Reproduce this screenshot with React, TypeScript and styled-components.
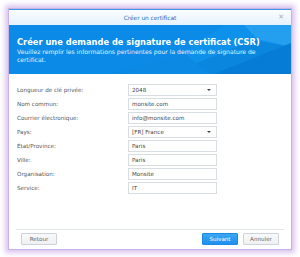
import { Fragment } from "react";
import styled, { createGlobalStyle } from "styled-components";

const GlobalStyle = createGlobalStyle`
  html, body {
    margin: 0;
    background: #ffffff;
  }
  body {
    font-family: "DejaVu Sans", "Liberation Sans", sans-serif;
  }
`;

const Page = styled.div`
  width: 300px;
  height: 257px;
  padding: 8px;
  box-sizing: border-box;
`;

const Window = styled.div`
  width: 284px;
  height: 242px;
  display: flex;
  flex-direction: column;
  background: #fff;
  border: 1px solid #c9b3e6;
  box-sizing: border-box;
  box-shadow: 0 0 5px 3px rgba(190, 150, 225, 0.55);
`;

const TitleBar = styled.div`
  position: relative;
  height: 15px;
  flex: none;
  border-top: 1px solid #3d97e3;
  background: linear-gradient(#fbfdff, #e5f1fc);
  display: flex;
  align-items: center;
  justify-content: center;
  font-size: 5.8px;
  color: #1e6fc0;
`;

const Close = styled.span`
  position: absolute;
  right: 7px;
  top: 3px;
  font-size: 7px;
  color: #a8b0b8;
`;

const Header = styled.div`
  position: relative;
  height: 49px;
  flex: none;
  overflow: hidden;
  background: #0b8be7;
  color: #fff;
  padding: 12px 8px 0 8px;
  box-sizing: border-box;
`;

const Facets = styled.svg`
  position: absolute;
  inset: 0;
`;

const HeaderText = styled.div`
  position: relative;
`;

const Title = styled.div`
  font-weight: bold;
  font-size: 8.3px;
  line-height: 11px;
  white-space: nowrap;
`;

const Subtitle = styled.div`
  font-size: 6.1px;
  line-height: 7.5px;
  width: 250px;
  color: #e4f2ff;
`;

const Form = styled.div`
  flex: 1;
  display: grid;
  grid-template-columns: 111px 89px;
  grid-auto-rows: 12px;
  row-gap: 2px;
  align-content: start;
  padding: 10px 8px 0 8px;
`;

const Label = styled.div`
  font-size: 5.6px;
  color: #555;
  display: flex;
  align-items: center;
`;

const Field = styled.div<{ $select?: boolean }>`
  position: relative;
  border: 1px solid #d8dde2;
  box-sizing: border-box;
  font-size: 5.6px;
  color: #444;
  display: flex;
  align-items: center;
  padding-left: 3px;
  ${(p) =>
    p.$select &&
    `
    &::after {
      content: "";
      position: absolute;
      right: 5px;
      top: 4px;
      border-left: 2.5px solid transparent;
      border-right: 2.5px solid transparent;
      border-top: 2.5px solid #444;
    }
  `}
`;

const Footer = styled.div`
  flex: none;
  margin: 0 7px;
  border-top: 1px solid #e3e6e9;
  padding: 3px 5px 4px 5px;
  display: flex;
  align-items: center;
  gap: 5px;
`;

const Spacer = styled.div`
  flex: 1;
`;

const Button = styled.button<{ $primary?: boolean }>`
  height: 12px;
  width: 36px;
  padding: 0;
  font-family: inherit;
  font-size: 5.6px;
  border-radius: 1px;
  border: 1px solid ${(p) => (p.$primary ? "#1c8ae0" : "#cdd3d9")};
  background: ${(p) =>
    p.$primary ? "linear-gradient(#3aa6f4, #1e90ee)" : "linear-gradient(#f8f9fa, #eef0f2)"};
  color: ${(p) => (p.$primary ? "#fff" : "#666")};
`;

const rows: { label: string; value: string; select?: boolean }[] = [
  { label: "Longueur de clé privée:", value: "2048", select: true },
  { label: "Nom commun:", value: "monsite.com" },
  { label: "Courrier électronique:", value: "info@monsite.com" },
  { label: "Pays:", value: "[FR] France", select: true },
  { label: "État/Province:", value: "Paris" },
  { label: "Ville:", value: "Paris" },
  { label: "Organisation:", value: "Monsite" },
  { label: "Service:", value: "IT" },
];

export default function App() {
  return (
    <>
      <GlobalStyle />
      <Page>
        <Window>
          <TitleBar>
            Créer un certificat
            <Close>✕</Close>
          </TitleBar>
          <Header>
            <Facets width="282" height="49" viewBox="0 0 282 49">
              <polygon points="140,49 215,0 282,0 282,49" fill="#0e91ea" />
              <polygon points="235,0 282,0 282,22 248,14" fill="#249ff0" />
              <polygon points="160,49 245,15 282,22 282,49" fill="#0a86df" />
              <polygon points="205,49 282,18 282,49" fill="#067cd6" />
              <polygon points="100,49 175,28 200,49" fill="#0c8ae3" />
            </Facets>
            <HeaderText>
              <Title>Créer une demande de signature de certificat (CSR)</Title>
              <Subtitle>
                Veuillez remplir les informations pertinentes pour la demande de signature de
                certificat.
              </Subtitle>
            </HeaderText>
          </Header>
          <Form>
            {rows.map((r) => (
              <Fragment key={r.label}>
                <Label>{r.label}</Label>
                <Field $select={r.select}>{r.value}</Field>
              </Fragment>
            ))}
          </Form>
          <Footer>
            <Button>Retour</Button>
            <Spacer />
            <Button $primary>Suivant</Button>
            <Button>Annuler</Button>
          </Footer>
        </Window>
      </Page>
    </>
  );
}
